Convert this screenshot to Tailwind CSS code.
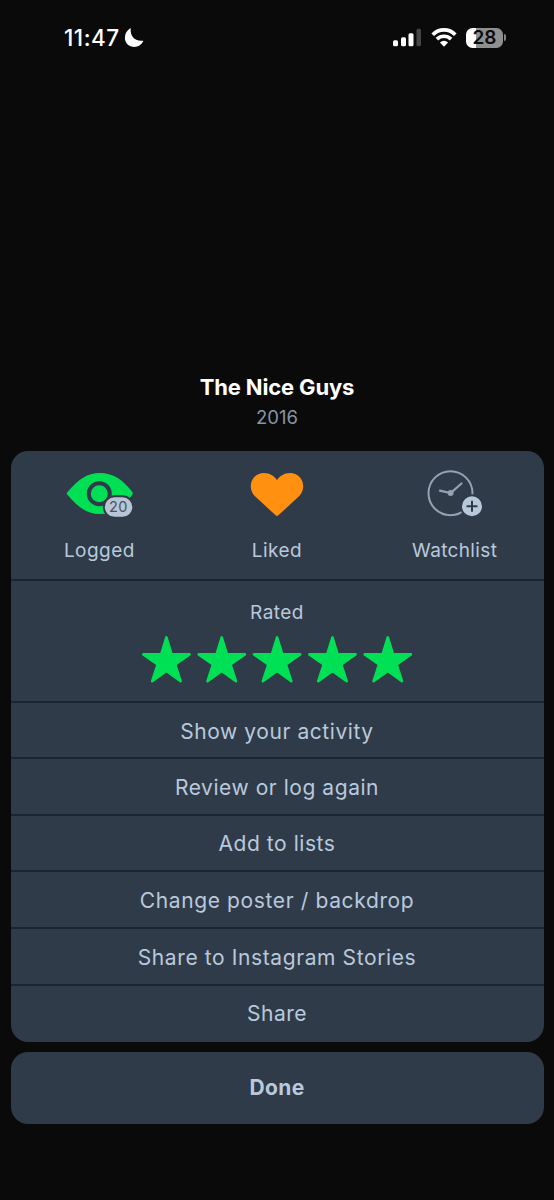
<!DOCTYPE html>
<html lang="en">
<head>
<meta charset="utf-8">
<title>The Nice Guys</title>
<script src="https://cdn.jsdelivr.net/npm/@tailwindcss/browser@4"></script>
</head>
<body class="bg-[#0a0a0a]">
<main class="w-[554px] h-[1200px] bg-[#0a0a0a] font-[Inter,sans-serif] overflow-hidden flex flex-col text-[#b9c9dc]">
  <header class="h-[76px] shrink-0 flex items-center justify-between pl-[64px] pr-[48px] text-white">
    <div class="flex items-center gap-[4px]">
      <span class="text-[22.5px] leading-[28px] font-medium tracking-[0.5px]">11:47</span>
      <svg class="w-[20px] h-[20px]" viewBox="0 0 20 20"><path fill="#fff" d="M6.700.8C6.100 7.900 10.500 13.400 18.400 12.700C19.200 12.600 19.500 13 19.100 13.600C17.300 17 14.200 19 10.500 19C5 19 .9 15 .9 9.700C.9 5.700 3 2.300 5.900.5C6.400.2 6.700.4 6.700.8Z"/></svg>
    </div>
    <div class="flex items-center gap-[9px]">
      <svg class="w-[30px] h-[20px]" viewBox="0 .7 30 20"><g fill="#fff"><rect x="1" y="13" width="5" height="6" rx="1.500"/><rect x="9" y="10" width="5" height="9" rx="1.500"/><rect x="16.500" y="6" width="5" height="13" rx="1.500"/></g><rect x="24.500" y="1.500" width="4.500" height="17.500" rx="1.500" fill="#454545"/></svg>
      <svg class="w-[26px] h-[20px]" viewBox="0 .5 26 20"><g fill="none" stroke="#fff" stroke-width="3.700"><path d="M1.700 7.200C8 .8 18 .8 24.300 7.200"/><path d="M5.900 11.600C9.900 7.800 16.100 7.800 20.100 11.600"/></g><path fill="#fff" d="M8.900 15.100Q13 11.500 17.100 15.100L13 19.200Z"/></svg>
      <div class="flex items-center gap-[1px] -mt-px">
        <div class="w-[37px] h-[20px] rounded-[6.500px] bg-linear-to-r from-white from-28% to-[#8f8f8f] to-28% text-[#0c0c0c] text-[19px] leading-[20px] font-semibold text-center">28</div>
        <div class="w-[2px] h-[7px] rounded-r-full bg-[#858585]"></div>
      </div>
    </div>
  </header>

  <div class="mt-[296px] text-center">
    <h1 class="text-[22px] leading-[30px] font-bold text-white tracking-[-0.15px]">The Nice Guys</h1>
    <p class="text-[18.500px] leading-[30px] text-[#8795a5]">2016</p>
  </div>

  <section class="mt-[18.500px] mx-[10.500px] h-[591px] shrink-0 rounded-[17px] bg-[#303b49] overflow-hidden flex flex-col divide-y-2 divide-[#1c242f] text-center">
    <div class="h-[130px] shrink-0 grid grid-cols-3 text-[19px] leading-[26px] tracking-[0.45px]">
      <div class="flex flex-col items-center pt-[17px]">
        <svg class="w-[68px] h-[52px]" viewBox="-.5 0 68 52">
          <path fill="#00e054" d="M1.700 26.500Q.7 25.500 1.700 24.400C13 11 22 5 34.300 5C47 5 56.500 11 66.300 23.300Q68 25.400 66.800 26.800C57 40 47 46 34.300 46C22 46 13 40 1.700 26.500Z"/>
          <circle cx="33.800" cy="25.700" r="10.500" fill="#00e054" stroke="#303b49" stroke-width="4"/>
          <rect x="38.300" y="28.300" width="29.500" height="21.500" rx="10.750" fill="#b8c5d6" stroke="#303b49" stroke-width="2"/>
          <text x="53" y="44.200" text-anchor="middle" font-family="Inter" font-size="14.500" fill="#465364">20</text>
        </svg>
        <span class="mt-[18px]">Logged</span>
      </div>
      <div class="flex flex-col items-center pt-[17px]">
        <svg class="w-[68px] h-[52px]" viewBox="0 0 68 52"><path fill="#ff9010" d="M32.900 47.600L12.300 28.500C8.500 25 7.800 20.700 7.800 18C7.800 10.700 13.500 5 20.800 5C27 5 31.800 8.400 34 12.300C36.200 8.400 41 5 47.200 5C54.500 5 60.200 10.700 60.200 18C60.200 20.700 59.500 25 55.700 28.500L35.100 47.600Q34 48.400 32.900 47.600Z"/></svg>
        <span class="mt-[18px]">Liked</span>
      </div>
      <div class="flex flex-col items-center pt-[17px]">
        <svg class="w-[68px] h-[52px]" viewBox=".8 0 68 52">
          <g fill="none" stroke="#94a2b3" stroke-linecap="round"><circle cx="30.300" cy="25.200" r="22" stroke-width="2"/><path stroke-width="2.200" d="M19.700 22.700L30.400 25L41.300 15.500"/></g>
          <circle cx="30.400" cy="25" r="2.900" fill="#94a2b3"/>
          <circle cx="51.800" cy="38.300" r="11" fill="#b8c8da" stroke="#303b49" stroke-width="2"/>
          <path stroke="#303b49" stroke-width="2" d="M46.300 38.300h11M51.800 32.800v11"/>
        </svg>
        <span class="mt-[18px] tracking-[0.35px]">Watchlist</span>
      </div>
    </div>
    <div class="h-[122px] shrink-0 pt-[19px]">
      <p class="text-[19px] leading-[26px] tracking-[0.45px]">Rated</p>
      <div class="flex justify-center mt-[8px]">
        <svg class="w-[276.750px] h-[52px]" viewBox="-27.400 -27.600 276.750 52">
          <defs><path id="star" stroke-width="2.600" stroke-linejoin="round" d="M0-24.200L5.240-7.210H23.120L8.760 2.850L14.220 19.580L0 9.250L-14.220 19.580L-8.760 2.850L-23.120-7.210H-5.240Z"/></defs>
          <g fill="#00e054" stroke="#00e054"><use href="#star"/><use href="#star" x="55.350"/><use href="#star" x="110.700"/><use href="#star" x="166.050"/><use href="#star" x="221.400"/></g>
        </svg>
      </div>
    </div>
    <div class="h-[56.650px] shrink-0 flex items-center justify-center pt-[3px] text-[21px] tracking-[0.57px]">Show your activity</div>
    <div class="h-[56.650px] shrink-0 flex items-center justify-center pt-[2px] text-[21px] tracking-[0.55px]">Review or log again</div>
    <div class="h-[56.650px] shrink-0 flex items-center justify-center pt-[2px] text-[21px] tracking-[0.55px]">Add to lists</div>
    <div class="h-[56.650px] shrink-0 flex items-center justify-center pt-[2px] text-[21px] tracking-[0.63px]">Change poster / backdrop</div>
    <div class="h-[56.650px] shrink-0 flex items-center justify-center pt-[2px] text-[21px] tracking-[0.61px]">Share to Instagram Stories</div>
    <div class="flex-1 flex items-center justify-center pt-px text-[21px] tracking-[0.5px]">Share</div>
  </section>
  <button class="mt-[10px] mx-[10.500px] h-[72px] shrink-0 rounded-[17px] bg-[#303b49] text-[21px] font-bold tracking-[0.4px]">Done</button>
</main>
</body>
</html>
